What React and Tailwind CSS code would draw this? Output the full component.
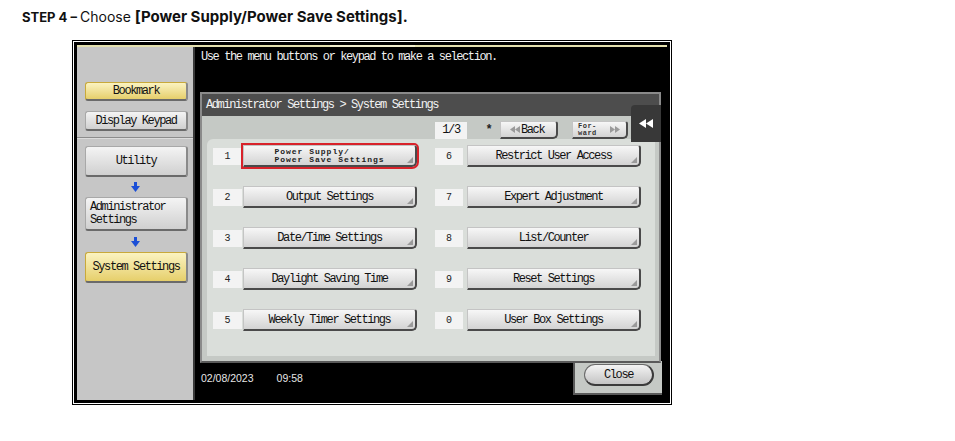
import React from 'react'

const screenFont = "font-['Liberation_Mono',monospace] text-[12px] tracking-[-1.4px]"
const labelFont = `${screenFont} text-[#111]`

function DownArrow() {
  return (
    <svg width="9" height="10" viewBox="0 0 9 10">
      <rect x="3" y="0" width="3" height="5" fill="#1b4fd6" />
      <polygon points="0,4 9,4 4.5,10" fill="#1b4fd6" />
    </svg>
  )
}

function SideButton({ children, yellow, className }) {
  const look = yellow
    ? 'bg-gradient-to-b from-[#fbf3c0] to-[#e6cf6a] border-[#c9a93a]'
    : 'bg-gradient-to-b from-[#f4f4f4] to-[#d0d0d0] border-[#a8a8a8]'
  return (
    <div
      className={`w-[103px] rounded-[3px] border border-b-2 border-r-2 border-b-[#6a6a6a] border-r-[#8a8a8a] text-[#1e1e1e] ${look} ${className}`}
    >
      {children}
    </div>
  )
}

function Corner() {
  return (
    <svg className="absolute right-[2px] bottom-[2px]" width="6" height="6" viewBox="0 0 6 6">
      <polygon points="6,0 6,6 0,6" fill="#9a9a9a" />
    </svg>
  )
}

function MenuButton({ label, selected, children }) {
  return (
    <div
      className={`relative w-[174px] h-[22px] flex items-center justify-center rounded-tr-[3px] rounded-br-[5px] border border-[#c4c4c4] border-b-2 border-r-2 border-b-[#4a4a4a] border-r-[#4a4a4a] bg-gradient-to-b from-[#f7f7f7] to-[#d3d3d3] text-[#1e1e1e] ${selected ? 'outline-2 outline-[#d8222a]' : ''}`}
    >
      {children || <span className={labelFont}>{label}</span>}
      <Corner />
    </div>
  )
}

function NumBox({ n, w }) {
  return (
    <div className={`${w} h-[17px] bg-[#f3f3f3] flex items-center justify-center text-[#222] font-['Liberation_Mono',monospace] text-[10px]`}>
      {n}
    </div>
  )
}

const left = ['Power', 'Output Settings', 'Date/Time Settings', 'Daylight Saving Time', 'Weekly Timer Settings']
const right = ['Restrict User Access', 'Expert Adjustment', 'List/Counter', 'Reset Settings', 'User Box Settings']
const rightNums = ['6', '7', '8', '9', '0']

export default function App() {
  return (
    <div className="w-[955px] h-[441px] bg-white overflow-hidden">
      <h1 className="h-[40px] pl-[22px] pt-[6px] text-[#111] font-['Inter',sans-serif] leading-[20px]">
        <span className="font-bold text-[13px]">STEP 4 – </span>
        <span className="text-[14px]">Choose </span>
        <span className="font-bold text-[15px]">
          <span className="text-[16px]">[</span>Power Supply/Power Save Settings<span className="text-[16px]">]</span>.
        </span>
      </h1>

      <div className="ml-[72px] w-[600px] h-[365px] border border-black">
        <div className="h-full border border-white">
          <div className="h-full border-[3px] border-black bg-black flex flex-col">
            <div className="h-[2px] flex">
              <div className="w-[253px] bg-[#e4e0ae]" />
              <div className="w-[85px] bg-[#f2efcf]" />
              <div className="flex-1 bg-[#e4e0ae]" />
            </div>

            <div className="flex flex-1">
              {/* left column */}
              <div className="w-[118px] bg-[#c6c6c6] border-r-2 border-[#3a3a3a] px-[8px] flex flex-col">
                <SideButton yellow className="mt-[35px] h-[19px] flex items-center justify-center">
                  <span className={labelFont}>Bookmark</span>
                </SideButton>
                <SideButton className="mt-[10px] h-[20px] flex items-center justify-center">
                  <span className={labelFont}>Display Keypad</span>
                </SideButton>
                <div className="-mx-[8px] mt-[6px] h-[2px] border-t border-[#8c8c8c] bg-[#dcdcdc]" />
                <SideButton className="mt-[7px] h-[31px] flex items-center justify-center">
                  <span className={labelFont}>Utility</span>
                </SideButton>
                <div className="h-[20px] flex items-center justify-center">
                  <DownArrow />
                </div>
                <SideButton className="h-[34px] flex flex-col justify-center pl-[4px]">
                  <span className={`${labelFont} leading-[13px]`}>Administrator</span>
                  <span className={`${labelFont} leading-[13px]`}>Settings</span>
                </SideButton>
                <div className="h-[21px] flex items-center justify-center">
                  <DownArrow />
                </div>
                <SideButton yellow className="h-[31px] flex items-center justify-center">
                  <span className={labelFont}>System Settings</span>
                </SideButton>
              </div>

              {/* right screen */}
              <div className="flex-1 flex flex-col">
                <div className={`h-[45px] pl-[6px] pt-[1px] text-[#f0f0f0] ${screenFont}`}>
                  Use the menu buttons or keypad to make a selection.
                </div>

                <div className="relative ml-[5px] w-[461px] h-[271px] border-2 border-[#8a8a8a] border-b-[#5a5a5a] flex flex-col">
                  <div className={`h-[22px] bg-[#4d4d4d] pl-[4px] flex items-center text-[#f2f2f2] ${screenFont}`}>
                    Administrator Settings &gt; System Settings
                  </div>
                  <div className="flex-1 bg-[#c5c9c5] flex flex-col">
                    <div className="mt-[5px] h-[18px] pr-[31px] flex items-center justify-end">
                      <div className={`w-[32px] h-[17px] bg-[#f3f3f3] flex items-center justify-center ${labelFont}`}>1/3</div>
                      <span className="ml-[17px] w-[10px] text-center text-[#222] text-[12px] font-bold font-['Liberation_Mono',monospace]">*</span>
                      <div className="relative ml-[6px] w-[58px] h-[18px] flex items-center pl-[9px] rounded-tr-[3px] rounded-br-[5px] border border-[#c4c4c4] border-b-2 border-r-2 border-b-[#4a4a4a] border-r-[#4a4a4a] bg-gradient-to-b from-[#f7f7f7] to-[#d3d3d3]">
                        <svg width="10" height="7" viewBox="0 0 10 7">
                          <polygon points="5,0 5,7 0,3.5" fill="#9a9a9a" />
                          <polygon points="10,0 10,7 5,3.5" fill="#9a9a9a" />
                        </svg>
                        <span className={`ml-[1px] ${labelFont}`}>Back</span>
                      </div>
                      <div className="relative ml-[14px] w-[56px] h-[18px] flex items-center pl-[5px] rounded-tr-[3px] rounded-br-[5px] border border-[#c4c4c4] border-b-2 border-r-2 border-b-[#4a4a4a] border-r-[#4a4a4a] bg-gradient-to-b from-[#f7f7f7] to-[#d3d3d3]">
                        <span className="flex flex-col font-['Liberation_Mono',monospace] text-[7px] leading-[7px] tracking-[0.5px] text-[#333] font-bold">
                          <span>For-</span>
                          <span>ward</span>
                        </span>
                        <svg className="ml-[13px]" width="10" height="7" viewBox="0 0 10 7">
                          <polygon points="0,0 0,7 5,3.5" fill="#9a9a9a" />
                          <polygon points="5,0 5,7 10,3.5" fill="#9a9a9a" />
                        </svg>
                      </div>
                    </div>

                    <div className="ml-[5px] mr-[4px] mb-[5px] flex-1 bg-[#dadeda] rounded-tl-[6px] pl-[6px] pt-[6px] flex flex-col gap-[19px]">
                      {left.map((label, i) => (
                        <div key={i} className="h-[22px] flex items-center">
                          <NumBox n={i + 1} w="w-[29px]" />
                          <div className="ml-[1px]">
                            {i === 0 ? (
                              <MenuButton selected>
                                <span className="flex flex-col font-['Liberation_Mono',monospace] text-[8px] leading-[8px] tracking-[1px] text-[#222] font-bold">
                                  <span>Power Supply/</span>
                                  <span>Power Save Settings</span>
                                </span>
                              </MenuButton>
                            ) : (
                              <MenuButton label={label} />
                            )}
                          </div>
                          <div className="ml-[18px]">
                            <NumBox n={rightNums[i]} w="w-[28px]" />
                          </div>
                          <div className="ml-[4px]">
                            <MenuButton label={right[i]} />
                          </div>
                        </div>
                      ))}
                    </div>
                  </div>

                  <div className="absolute right-[-2px] top-[11px] w-[30px] h-[37px] bg-[#383838] rounded-tl-[4px] flex items-center justify-center">
                    <svg width="14" height="9" viewBox="0 0 14 9">
                      <polygon points="7,0 7,9 0,4.5" fill="#ffffff" />
                      <polygon points="14,0 14,9 7,4.5" fill="#ffffff" />
                    </svg>
                  </div>
                </div>

                <div className="flex flex-1">
                  <div className="flex-1 pl-[6px] flex items-center gap-[23px] text-[#e6e6e6] text-[10.5px] font-['Liberation_Sans',sans-serif] pb-[6px]">
                    <span>02/08/2023</span>
                    <span>09:58</span>
                  </div>
                  <div className="-mt-[2px] mr-[5px] w-[89px] h-[34px] bg-[#c5c9c5] border-l-2 border-b-2 border-[#5a5a5a] pl-[9px] pt-[3px]">
                    <div className="w-[70px] h-[22px] rounded-full border border-[#6a6a6a] border-b-2 border-r-2 border-b-[#3a3a3a] border-r-[#3a3a3a] bg-gradient-to-b from-[#f4f4f4] to-[#c4c4c4] flex items-center justify-center">
                      <span className={labelFont}>Close</span>
                    </div>
                  </div>
                </div>
              </div>
            </div>
          </div>
        </div>
      </div>
    </div>
  )
}
